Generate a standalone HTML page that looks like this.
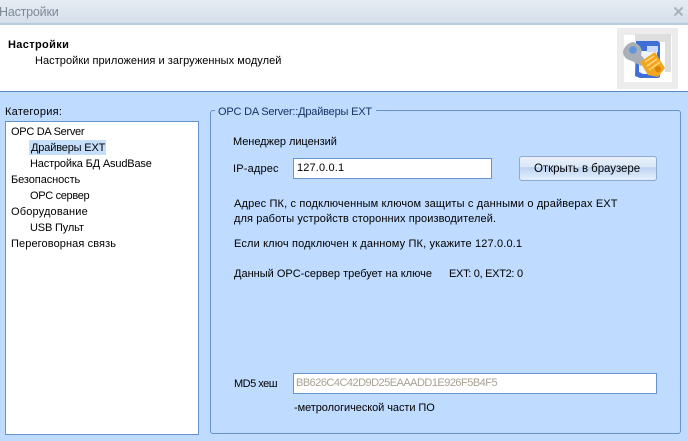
<!DOCTYPE html>
<html><head><meta charset="utf-8">
<style>
html,body{margin:0;padding:0;background:#bfdbff}
#p{position:relative;width:688px;height:441px;overflow:hidden;background:#bfdbff;font-family:"Liberation Sans","Noto Sans CJK JP",sans-serif;font-size:11px;color:#000}
#p div,#p span.t{position:absolute;box-sizing:border-box}
.t{white-space:nowrap;line-height:13px;display:block}
.box{background:#fff;border:1px solid #6593cf}
</style></head><body>
<div id="p">
<div style="left:0;top:0;width:688px;height:23px;background:linear-gradient(#e6ecf3,#d5dfea)"></div>
<div style="left:0;top:23px;width:688px;height:2px;background:#b7cade"></div>
<span class="t" style="left:-1px;top:6px;font-size:12.5px;color:#7e8a98;letter-spacing:-.2px">Настройки</span>
<svg style="position:absolute;left:673px;top:6px" width="11" height="11" viewBox="0 0 11 11"><path d="M1.5 1.5L9.5 9.5M9.5 1.5L1.5 9.5" stroke="#a9b3bd" stroke-width="2" fill="none"/></svg>
<div style="left:0;top:25px;width:688px;height:66px;background:#fff"></div>
<div style="left:0;top:91px;width:688px;height:1px;background:#5f89bd"></div>
<span class="t" style="left:8px;top:39px;font-weight:bold;letter-spacing:.35px">Настройки</span>
<span class="t" style="left:35px;top:55px;letter-spacing:.05px">Настройки приложения и загруженных модулей</span>
<svg style="position:absolute;left:617px;top:28px" width="61" height="61" viewBox="617 28 61 61">
<rect x="617" y="28" width="61" height="61" fill="#ececec"/>
<rect x="624" y="35" width="48" height="47" fill="#fff"/>
<path d="M635 34H671V72H665V42H635Z" fill="#dedede"/>
<path d="M636 41H658L660 43V77L658 78H640L635 76Z" fill="#3f6fd6"/>
<path d="M639 51H657V74H643L639 72Z" fill="#eef3fd"/>
<path d="M647 46H658V52H647Z" fill="#cddcf6"/>
<path d="M633 42C627 43 623 48 623 53C624 58 628 60 632 61L641 66L645 60L641 55C643 49 640 44 633 42Z" fill="#a9afb8"/>
<circle cx="633" cy="50" r="3.8" fill="#5f95dc"/>
<path d="M640 62L655 52L665 68L658 77L648 75Z" fill="#f2a61f"/>
<path d="M645 62L654 56M647 66L657 59M649 70L660 62" stroke="#ffd777" stroke-width="1.5" fill="none"/>
<circle cx="658" cy="69" r="3" fill="#d98309"/>
</svg>

<span class="t" style="left:5px;top:106px;letter-spacing:.27px">Категория:</span>
<div class="box" style="left:5px;top:121px;width:194px;height:314px"></div>
<div style="left:29px;top:140px;width:77px;height:15px;background:#c5def9"></div>
<span class="t" style="left:11px;top:126px;letter-spacing:-.29px">OPC DA Server</span>
<span class="t" style="left:31px;top:142px;letter-spacing:-.16px">Драйверы EXT</span>
<span class="t" style="left:30px;top:158px;letter-spacing:-.16px">Настройка БД AsudBase</span>
<span class="t" style="left:11px;top:174px;letter-spacing:-.08px">Безопасность</span>
<span class="t" style="left:30px;top:190px;letter-spacing:-.33px">OPC сервер</span>
<span class="t" style="left:11px;top:206px;letter-spacing:.17px">Оборудование</span>
<span class="t" style="left:30px;top:222px;letter-spacing:-.16px">USB Пульт</span>
<span class="t" style="left:11px;top:238px;letter-spacing:.1px">Переговорная связь</span>

<div style="left:210px;top:110px;width:471px;height:324px;border:1px solid #6593cf;border-radius:3px"></div>
<div style="left:215px;top:104px;width:161px;height:14px;background:#bfdbff"></div>
<span class="t" style="left:218px;top:106px;letter-spacing:-.2px;color:#15315e">OPC DA Server::Драйверы EXT</span>

<span class="t" style="left:233px;top:136px;letter-spacing:-.05px">Менеджер лицензий</span>
<span class="t" style="left:233px;top:163px;letter-spacing:.17px">IP-адрес</span>
<div class="box" style="left:293px;top:158px;width:199px;height:21px"></div>
<span class="t" style="left:297px;top:162px;letter-spacing:.15px">127.0.0.1</span>
<div style="left:519px;top:156px;width:138px;height:25px;border:1px solid #8fa9cc;border-radius:3px;background:linear-gradient(#e9f1fb 0,#dbe8f8 42%,#bcd2ee 46%,#cfe1f7 70%,#e3effc 100%)"></div>
<span class="t" style="left:534px;top:163px;font-size:11.5px;letter-spacing:-.05px">Открыть в браузере</span>

<span class="t" style="left:234px;top:198px;letter-spacing:.155px">Адрес ПК, с подключенным ключом защиты с данными о драйверах EXT</span>
<span class="t" style="left:234px;top:213px;letter-spacing:.1px">для работы устройств сторонних производителей.</span>
<span class="t" style="left:234px;top:238px;letter-spacing:.15px">Если ключ подключен к данному ПК, укажите 127.0.0.1</span>
<span class="t" style="left:234px;top:268px;letter-spacing:0">Данный OPC-сервер требует на ключе</span>
<span class="t" style="left:449px;top:268px;letter-spacing:-.3px">EXT: 0, EXT2: 0</span>

<span class="t" style="left:234px;top:378px;letter-spacing:-.5px">MD5 хеш</span>
<div class="box" style="left:293px;top:373px;width:364px;height:21px"></div>
<span class="t" style="left:296px;top:377px;letter-spacing:-.52px;color:#a9a294">BB626C4C42D9D25EAAADD1E926F5B4F5</span>
<span class="t" style="left:294px;top:402px;letter-spacing:-.07px">-метрологической части ПО</span>
</div>
</body></html>
